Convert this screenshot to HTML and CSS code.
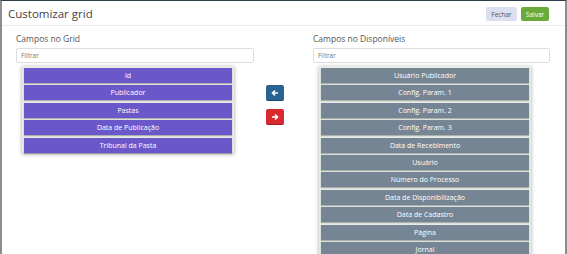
FILE: index.html
```html
<!DOCTYPE html>
<html lang="pt-BR">
<head>
  <meta charset="UTF-8" />
  <meta name="viewport" content="width=device-width, initial-scale=1.0"/>
  <title>Customizar grid</title>
  <link rel="stylesheet" href="styles.css">
</head>
<body>

  <div class="modal">
    <div class="modal-header">
      <h1>Customizar grid</h1>
      <div class="actions">
        <button class="btn-close">Fechar</button>
        <button class="btn-save">Salvar</button>
      </div>
    </div>

    <div class="modal-body">
      <!-- Campos no grid -->
      <div class="column">
        <label>Campos no Grid</label>
        <input type="text" placeholder="Filtrar">
        <div class="field-list">
          <div class="field used">Id</div>
          <div class="field used">Publicador</div>
          <div class="field used">Pastas</div>
          <div class="field used">Data de Publicação</div>
          <div class="field used">Tribunal da Pasta</div>
        </div>
      </div>

      <!-- Mover -->
      <div class="movers">
        <button class="move-left">
          <svg width="8" height="8" viewBox="0 0 8 8"><path d="M7 4H1.8M4 1.5L1.5 4 4 6.5" stroke="#fff" stroke-width="1.6" fill="none"/></svg>
        </button>
        <button class="move-right">
          <svg width="8" height="8" viewBox="0 0 8 8"><path d="M1 4h5.2M4 1.5L6.5 4 4 6.5" stroke="#fff" stroke-width="1.6" fill="none"/></svg>
        </button>
      </div>

      <!-- Campos disponiveis -->
      <div class="column">
        <label>Campos no Disponíveis</label>
        <input type="text" placeholder="Filtrar">
        <div class="field-list">
          <div class="field free">Usuário Publicador</div>
          <div class="field free">Config. Param. 1</div>
          <div class="field free">Config. Param. 2</div>
          <div class="field free">Config. Param. 3</div>
          <div class="field free">Data de Recebimento</div>
          <div class="field free">Usuário</div>
          <div class="field free">Número do Processo</div>
          <div class="field free">Data de Disponibilização</div>
          <div class="field free">Data de Cadastro</div>
          <div class="field free">Página</div>
          <div class="field free">Jornal</div>
        </div>
      </div>
    </div>
  </div>

</body>
</html>
```

FILE: styles.css
```css
body {
  font-family: "Open Sans", Arial, sans-serif;
  margin: 0;
  background-color: #fff;
  height: 254px;
  overflow: hidden;
}

.modal {
  height: 100%;
  border-top: 1px solid #2d3c45;
  border-left: 2px solid #8d8d8d;
  border-right: 2px solid #8d8d8d;
  box-sizing: border-box;
  background: #fff;
}

.modal-header {
  display: flex;
  justify-content: space-between;
  align-items: center;
  height: 24px;
  padding: 0 16px 0 6px;
  border-bottom: 1px solid #ececec;
}

.modal-header h1 {
  margin: 0;
  font-size: 11.5px;
  font-weight: 400;
  color: #444;
}

.actions {
  display: flex;
  gap: 4px;
  margin-top: 2px;
}

.actions button {
  border: none;
  border-radius: 2px;
  font-family: inherit;
  font-size: 6.5px;
  height: 14px;
  padding: 0;
}

.btn-close {
  width: 31px;
  background-color: #dcdfef;
  color: #555;
}

.btn-save {
  width: 28px;
  background-color: #6aaa3a;
  color: #fff;
}

.modal-body {
  display: grid;
  grid-template-columns: 238px 59px 237px;
  padding: 7px 0 0 14px;
}

.column label {
  display: block;
  font-size: 8.5px;
  color: #555;
  height: 12px;
  line-height: 12px;
}

.column input {
  display: block;
  width: 100%;
  height: 15px;
  margin-top: 3px;
  box-sizing: border-box;
  border: 1px solid #dedede;
  border-radius: 2px;
  padding: 0 4px;
  font-family: inherit;
  font-size: 6.5px;
}

.column input::placeholder {
  color: #777;
}

.field-list {
  width: 208px;
  margin: 3px 0 0 6px;
  padding: 2px 2px 0;
  background: #e6ebe6;
  box-shadow: 0 1px 4px rgba(0,0,0,0.35);
}

.field {
  height: 15px;
  line-height: 15px;
  margin-bottom: 2.4px;
  text-align: center;
  color: #fff;
  font-size: 7px;
  box-shadow: 0 1px 1px rgba(0,0,0,0.25);
}

.field.used {
  background-color: #6a58cb;
}

.field.free {
  background-color: #768594;
}

.movers {
  display: flex;
  flex-direction: column;
  align-items: flex-start;
  gap: 8px;
  padding: 52px 0 0 12px;
}

.movers button {
  width: 18px;
  height: 16px;
  border: none;
  border-radius: 2px;
  padding: 0;
  display: flex;
  align-items: center;
  justify-content: center;
}

.move-left {
  background-color: #286392;
  border-bottom: 1px solid #1d4c72 !important;
}

.move-right {
  background-color: #d9282e;
  border-bottom: 1px solid #a91c20 !important;
}
```
